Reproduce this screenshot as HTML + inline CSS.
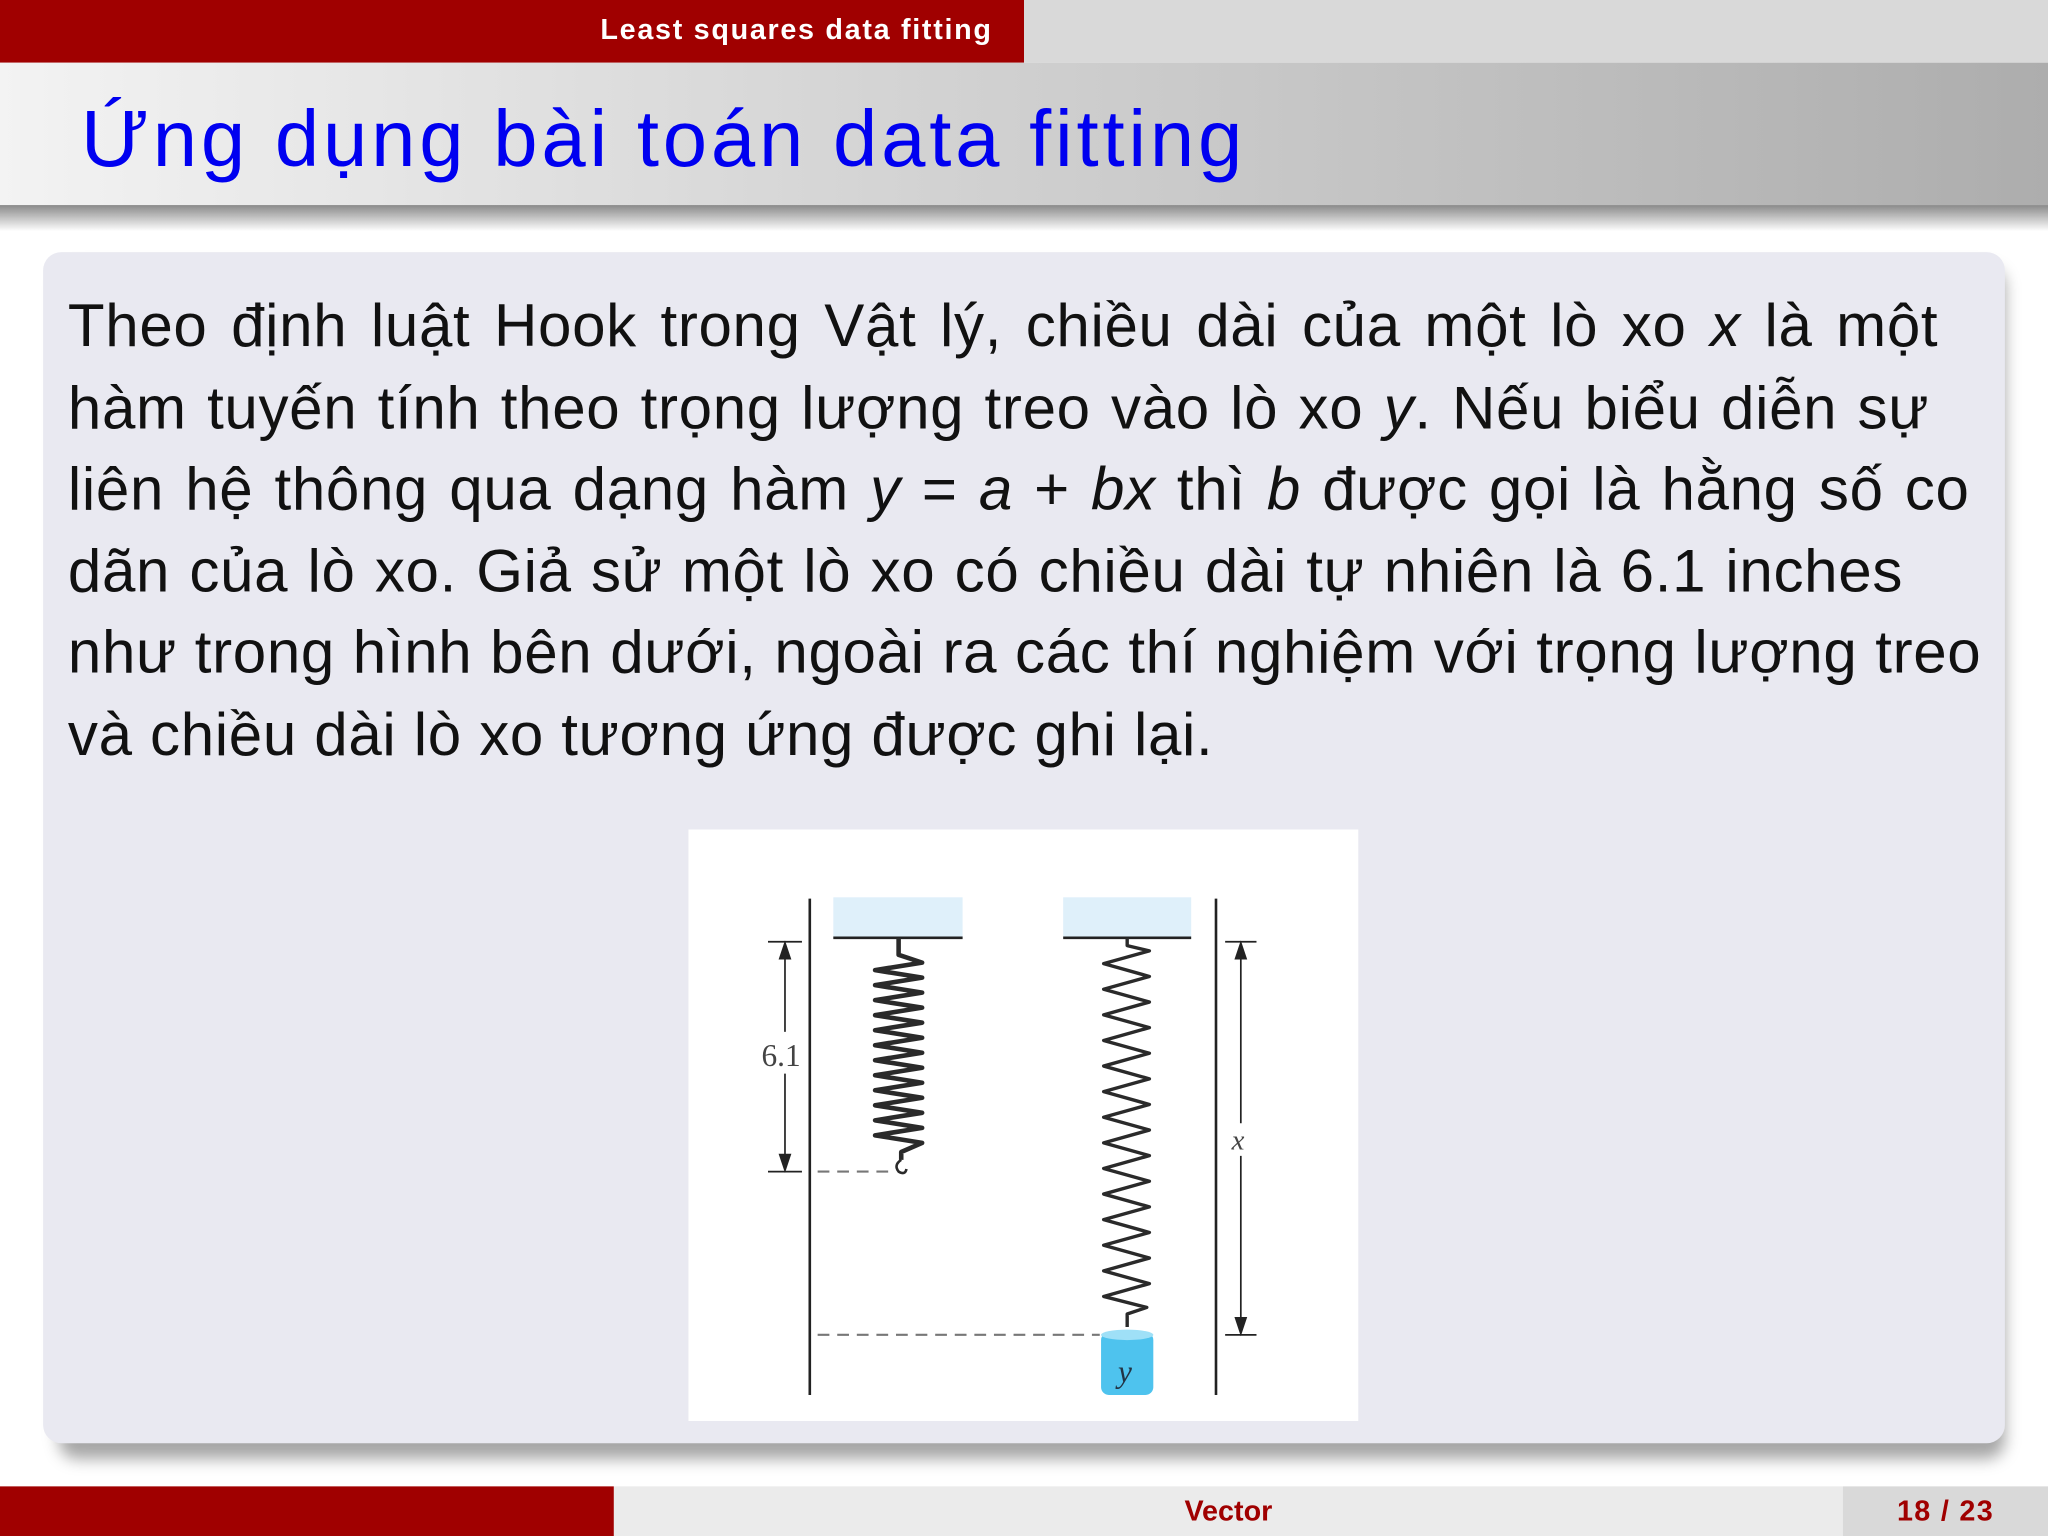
<!DOCTYPE html>
<html><head><meta charset="utf-8"><style>
html,body{margin:0;padding:0;width:2048px;height:1536px;overflow:hidden;background:#fff;}
#s{position:absolute;left:0;top:0;width:1568px;height:1176px;transform:scale(1.306122);transform-origin:0 0;font-family:"Liberation Sans",sans-serif;}
.a{position:absolute;}
.l{white-space:nowrap;text-align:justify;text-align-last:justify;height:62.6px;}
</style></head><body><div id="s">
<div class="a" style="left:0;top:0;width:784px;height:48px;background:#a00000;"></div>
<div class="a" style="left:784px;top:0;width:784px;height:48px;background:#d9d9d9;"></div>
<div class="a" style="left:0;top:8px;width:760px;text-align:right;color:#fff;font-weight:bold;font-size:22px;line-height:30px;letter-spacing:1.3px;">Least squares data fitting</div>
<div class="a" style="left:0;top:48px;width:1568px;height:109px;background:linear-gradient(to right,#f3f3f3,#d6d6d6 40%,#adadad);"></div>
<div class="a" style="left:0;top:157px;width:1568px;height:20px;background:linear-gradient(to bottom,#8a8a8a,rgba(255,255,255,0));"></div>
<div class="a" style="left:62px;top:66px;color:#0000f0;font-size:61px;line-height:80px;white-space:nowrap;letter-spacing:2.9px;">Ứng dụng bài toán data fitting</div>
<div class="a" style="left:45px;top:205px;width:1490px;height:912px;border-radius:14px;background:rgba(0,0,0,0.35);filter:blur(6px);"></div>
<div class="a" style="left:33px;top:193px;width:1502px;height:912px;border-radius:14px;background:#e9e9f1;"></div>
<div class="a" style="left:52px;top:218px;font-size:46px;line-height:62.6px;color:#111;letter-spacing:0.5px;">
<div class="l" style="width:1432px;">Theo định luật Hook trong Vật lý, chiều dài của một lò xo <i>x</i> là một</div>
<div class="l" style="width:1425px;">hàm tuyến tính theo trọng lượng treo vào lò xo <i>y</i>. Nếu biểu diễn sự</div>
<div class="l" style="width:1456px;">liên hệ thông qua dạng hàm <i>y</i> = <i>a</i> + <i>bx</i> thì <i>b</i> được gọi là hằng số co</div>
<div class="l" style="width:1405px;">dãn của lò xo. Giả sử một lò xo có chiều dài tự nhiên là 6.1 inches</div>
<div class="l" style="width:1465px;">như trong hình bên dưới, ngoài ra các thí nghiệm với trọng lượng treo</div>
<div class="l" style="width:877px;">và chiều dài lò xo tương ứng được ghi lại.</div>
</div>
<svg class="a" style="left:527px;top:635px;" width="513" height="453" viewBox="527 635 513 453">
<rect x="527" y="635" width="513" height="453" fill="#fff"/>
<g stroke="#222" stroke-width="2" fill="none">
<line x1="620" y1="688" x2="620" y2="1068"/>
<line x1="931" y1="688" x2="931" y2="1068"/>
</g>
<rect x="638" y="687" width="99" height="31" fill="#dff0fa"/>
<rect x="814" y="687" width="98" height="31" fill="#dff0fa"/>
<line x1="638" y1="718" x2="737" y2="718" stroke="#222" stroke-width="2"/>
<line x1="814" y1="718" x2="912" y2="718" stroke="#222" stroke-width="2"/>
<g stroke="#222" stroke-width="1.3" fill="#222">
<line x1="588" y1="721" x2="614" y2="721"/><line x1="588" y1="897" x2="614" y2="897"/>
<line x1="601" y1="728" x2="601" y2="790"/><line x1="601" y1="822" x2="601" y2="890"/>
<path d="M601,722 L597,734 L605,734Z"/><path d="M601,896 L597,884 L605,884Z"/>
<line x1="938" y1="721" x2="962" y2="721"/><line x1="938" y1="1022" x2="962" y2="1022"/>
<line x1="950" y1="728" x2="950" y2="860"/><line x1="950" y1="885" x2="950" y2="1015"/>
<path d="M950,722 L946,734 L954,734Z"/><path d="M950,1021 L946,1009 L954,1009Z"/>
</g>
<text x="583" y="816" font-family="Liberation Serif,serif" font-size="24" fill="#444">6.1</text>
<text x="943" y="880" font-family="Liberation Serif,serif" font-style="italic" font-size="22" fill="#444">x</text>
<g stroke="#777" stroke-width="1.6" stroke-dasharray="9,6" fill="none">
<line x1="626" y1="897" x2="682" y2="897"/>
<line x1="626" y1="1022" x2="842" y2="1022"/>
</g>
<polyline fill="none" stroke="#2a2a2a" stroke-width="3.5" stroke-linejoin="round" points="688,718 688,731 706,737 670,742.75 706,748.5 670,754.25 706,760 670,765.75 706,771.5 670,777.25 706,783 670,788.75 706,794.5 670,800.25 706,806 670,811.75 706,817.5 670,823.25 706,829 670,834.75 706,840.5 670,846.25 706,852 670,857.75 706,863.5 670,869.25 706,875 690,882 690,888"/>
<path d="M690,888 q-6,4 -2,9 q5,3 6,-2" fill="none" stroke="#2a2a2a" stroke-width="2"/>
<polyline fill="none" stroke="#2a2a2a" stroke-width="2.6" stroke-linejoin="round" points="863,718 863,724 880,728 845,737.8 880,747.6 845,757.4 880,767.2 845,777 880,786.8 845,796.6 880,806.4 845,816.2 880,826 845,835.8 880,845.6 845,855.4 880,865.2 845,875 880,884.8 845,894.6 880,904.4 845,914.2 880,924 845,933.8 880,943.6 845,953.4 880,963.2 845,973 880,982.8 845,992.6 878,1001 863,1006 863,1016"/>
<rect x="843" y="1020" width="40" height="48" rx="6" fill="#4ec3ee"/>
<ellipse cx="863" cy="1022" rx="20" ry="4" fill="#9fe0f7"/>
<text x="856" y="1058" font-family="Liberation Serif,serif" font-style="italic" font-size="24" fill="#234">y</text>
</svg>
<div class="a" style="left:0;top:1138px;width:470px;height:38px;background:#a00000;"></div>
<div class="a" style="left:470px;top:1138px;width:941px;height:38px;background:#ebebeb;"></div>
<div class="a" style="left:1411px;top:1138px;width:157px;height:38px;background:#d9d9d9;"></div>
<div class="a" style="left:470px;top:1142px;width:941px;text-align:center;color:#a00000;font-weight:bold;font-size:22px;line-height:30px;">Vector</div>
<div class="a" style="left:1411px;top:1142px;width:157px;text-align:center;color:#a00000;font-weight:bold;font-size:22px;line-height:30px;letter-spacing:1px;">18 / 23</div>
</div></body></html>
